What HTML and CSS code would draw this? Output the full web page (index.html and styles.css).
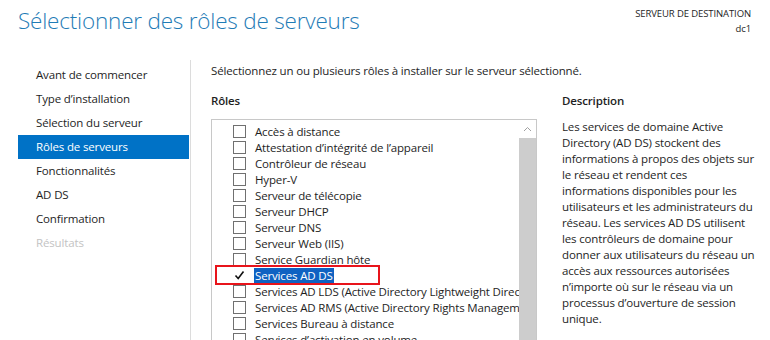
FILE: index.html
```html
<!DOCTYPE html>
<html lang="fr">
  <head>
    <meta charset="UTF-8" />
    <title>Assistant Ajout de rôles et de fonctionnalités</title>
    <link rel="stylesheet" href="styles.css">
  </head>
  <body>
    <div class="header">
      <h1>Sélectionner des rôles de serveurs</h1>
      <div class="dest">
        <div>SERVEUR DE DESTINATION</div>
        <div>dc1</div>
      </div>
    </div>
    <div class="wizard">
      <ul class="steps">
        <li>Avant de commencer</li>
        <li>Type d’installation</li>
        <li>Sélection du serveur</li>
        <li class="active">Rôles de serveurs</li>
        <li>Fonctionnalités</li>
        <li>AD DS</li>
        <li>Confirmation</li>
        <li class="disabled">Résultats</li>
      </ul>
      <div class="content">
        <p class="intro">Sélectionnez un ou plusieurs rôles à installer sur le serveur sélectionné.</p>
        <div class="columns">
          <div class="roles">
            <h3>Rôles</h3>
            <div class="listbox">
              <ul class="role-list" id="roleList"></ul>
              <div class="scrollbar">
                <div class="scroll-up">
                  <svg width="9" height="6" viewBox="0 0 9 6"><path d="M1 5 L4.5 1.5 L8 5" fill="none" stroke="#a0a0a0" stroke-width="1"/></svg>
                </div>
                <div class="scroll-thumb"></div>
              </div>
            </div>
          </div>
          <div class="description">
            <h3>Description</h3>
            <p>Les services de domaine Active<br>
              Directory (AD DS) stockent des<br>
              informations à propos des objets sur<br>
              le réseau et rendent ces<br>
              informations disponibles pour les<br>
              utilisateurs et les administrateurs du<br>
              réseau. Les services AD DS utilisent<br>
              les contrôleurs de domaine pour<br>
              donner aux utilisateurs du réseau un<br>
              accès aux ressources autorisées<br>
              n’importe où sur le réseau via un<br>
              processus d’ouverture de session<br>
              unique.</p>
          </div>
        </div>
      </div>
    </div>
    <script>
      const roles = [
        "Accès à distance",
        "Attestation d’intégrité de l’appareil",
        "Contrôleur de réseau",
        "Hyper-V",
        "Serveur de télécopie",
        "Serveur DHCP",
        "Serveur DNS",
        "Serveur Web (IIS)",
        "Service Guardian hôte",
        "Services AD DS",
        "Services AD LDS (Active Directory Lightweight Directory Services)",
        "Services AD RMS (Active Directory Rights Management Services)",
        "Services Bureau à distance",
        "Services d’activation en volume",
      ];
      const checkSvg = '<svg width="11" height="11" viewBox="0 0 11 11"><path d="M1.5 5.5 L4.2 8.5 L9.5 1.5" fill="none" stroke="#111" stroke-width="1.6"/></svg>';
      const list = document.getElementById("roleList");
      roles.forEach((r) => {
        const li = document.createElement("li");
        const selected = r === "Services AD DS";
        if (selected) li.className = "selected";
        li.innerHTML = `<span class="box">${selected ? checkSvg : ""}</span><span class="label">${r}</span>`;
        list.appendChild(li);
      });
    </script>
  </body>
</html>
```

FILE: styles.css
```css
body {
  margin: 0;
  background: #fff;
  font-family: "Segoe UI", "Open Sans", sans-serif;
  font-size: 11.5px;
  letter-spacing: -0.15px;
  color: #1e1e1e;
  overflow: hidden;
}
.header {
  display: flex;
  justify-content: space-between;
  height: 60px;
}
h1 {
  margin: 5px 0 0 18px;
  font-size: 22.5px;
  font-weight: 300;
  color: #1f7cb6;
  letter-spacing: -0.2px;
}
.dest {
  margin: 6px 19px 0 0;
  text-align: right;
  font-size: 9.5px;
  line-height: 15px;
  letter-spacing: -0.1px;
}
.wizard {
  display: flex;
}
.steps {
  list-style: none;
  margin: 0;
  padding: 3px 0 0;
  width: 190px;
  height: 280px;
  border-right: 1px solid #dcdcdc;
}
.steps li {
  margin-left: 18px;
  width: 153px;
  padding-left: 18px;
  height: 24px;
  line-height: 24px;
}
.steps li.active {
  background: #0072c6;
  color: #fff;
}
.steps li.disabled {
  color: #c3c3c3;
}
.content {
  padding-left: 20px;
}
.intro {
  margin: 3px 0 0;
  line-height: 16px;
}
.columns {
  display: flex;
  margin-top: 14px;
}
.roles {
  width: 326px;
}
h3 {
  margin: 0 0 10px;
  font-size: 11.5px;
  font-weight: 600;
  line-height: 16px;
}
.listbox {
  display: flex;
  height: 240px;
  border: 1px solid #c8c8c8;
  border-bottom: none;
}
.role-list {
  flex: 1;
  list-style: none;
  margin: 0;
  padding: 3px 0 0 21px;
  overflow: hidden;
  white-space: nowrap;
}
.role-list li {
  display: flex;
  align-items: center;
  height: 16px;
}
.box {
  display: flex;
  align-items: center;
  justify-content: center;
  width: 11px;
  height: 11px;
  border: 1px solid #707070;
  margin-right: 8px;
  flex-shrink: 0;
}
.selected {
  position: relative;
}
.selected .box {
  border-color: #fff;
}
.selected::after {
  content: "";
  position: absolute;
  left: -18px;
  top: -2px;
  width: 161px;
  height: 16px;
  border: 2px solid #e8141b;
}
.label {
  line-height: 15px;
  padding: 0 1px;
}
.selected .label {
  background: #0f62c2;
  color: #fff;
}
.scrollbar {
  width: 17px;
  display: flex;
  flex-direction: column;
}
.scroll-up {
  height: 18px;
  display: flex;
  align-items: center;
  justify-content: center;
}
.scroll-thumb {
  flex: 1;
  background: #cdcdcd;
}
.description {
  margin-left: 25px;
}
.description p {
  margin: 0;
  line-height: 16px;
  white-space: nowrap;
}
```
